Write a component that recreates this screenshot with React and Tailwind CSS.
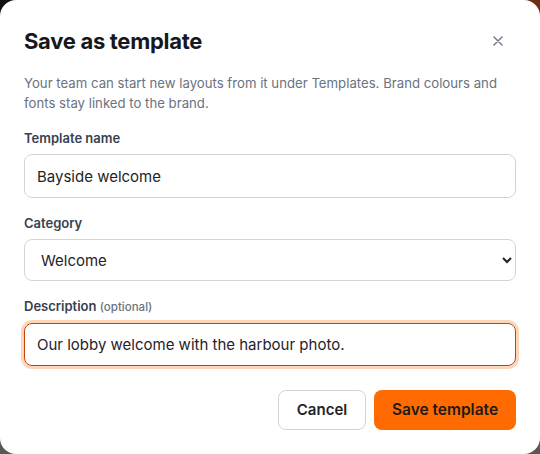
import React from "react";

export default function App() {
  return (
    <div className="w-[540px] h-[454px] bg-[linear-gradient(to_bottom,transparent_50%,#585858_50%),linear-gradient(to_right,#111111_50%,#6b2e12_50%)]" style={{ fontFamily: "Inter, 'Noto Sans', sans-serif" }}>
      <div className="w-full h-full bg-white rounded-2xl px-6 pt-6 flex flex-col">
        <div className="flex items-center justify-between h-[34px]">
          <h2 className="text-[22px] font-bold text-[#16181d] tracking-[-0.3px]">Save as template</h2>
          <button className="w-6 h-6 flex items-center justify-center text-[#6b7280] mr-[6px]">
            <svg width="12" height="12" viewBox="0 0 12 12" fill="none" stroke="currentColor" strokeWidth="1.4" strokeLinecap="round">
              <path d="M2 2L10 10M10 2L2 10" />
            </svg>
          </button>
        </div>
        <p className="mt-[15px] text-[13.2px] leading-5 text-[#6b7280]">
          Your team can start new layouts from it under Templates. Brand colours and fonts stay linked to the brand.
        </p>
        <div className="mt-[15px] flex flex-col gap-[6px]">
          <label className="text-[13px] font-semibold text-[#374151] leading-5">Template name</label>
          <input
            className="h-[44px] w-full rounded-lg border border-[#d1d5db] px-3 text-[15px] text-[#1f2328] outline-none"
            defaultValue="Bayside welcome"
          />
        </div>
        <div className="mt-[15px] flex flex-col gap-[6px]">
          <label className="text-[13px] font-semibold text-[#374151] leading-5">Category</label>
          <select
            className="h-[42px] w-full rounded-lg border border-[#d1d5db] px-3 text-[15px] text-[#1f2328] bg-white outline-none"
            defaultValue="Welcome"
          >
            <option>Welcome</option>
            <option>Promotion</option>
            <option>Announcement</option>
          </select>
        </div>
        <div className="mt-[15px] flex flex-col gap-[6px]">
          <label className="text-[13px] font-semibold text-[#374151] leading-5">
            Description <span className="text-[11.5px] font-medium text-[#6b7280]">(optional)</span>
          </label>
          <input
            className="h-[43px] w-full rounded-lg border border-[#c2410c] px-3 text-[15px] text-[#1f2328] outline-none ring-[3px] ring-[#fdd6b9]"
            defaultValue="Our lobby welcome with the harbour photo."
          />
        </div>
        <div className="mt-6 flex justify-end gap-2">
          <button className="h-10 w-[88px] rounded-lg border border-[#d1d5db] bg-white text-[15px] font-semibold text-[#1f2328]">
            Cancel
          </button>
          <button className="h-10 w-[142px] rounded-lg bg-[#ff6b00] text-[15.5px] font-semibold text-[#1f1a17]">
            Save template
          </button>
        </div>
      </div>
    </div>
  );
}
